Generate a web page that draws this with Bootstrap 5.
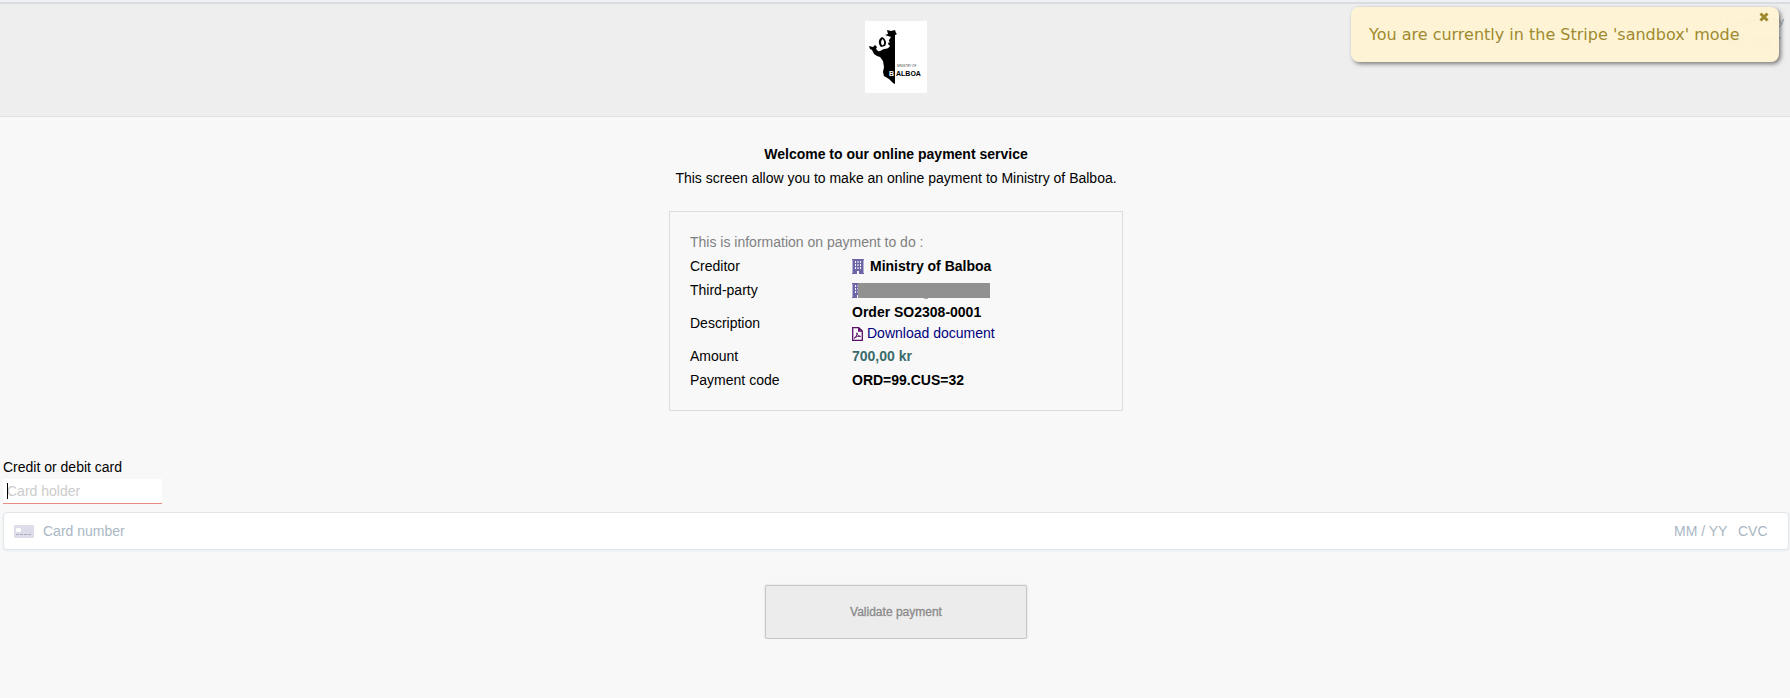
<!DOCTYPE html>
<html lang="en">
<head>
<meta charset="utf-8">
<meta name="viewport" content="width=device-width, initial-scale=1">
<title>Online payment</title>
<link href="https://cdn.jsdelivr.net/npm/bootstrap@5.3.0/dist/css/bootstrap.min.css" rel="stylesheet">
<script src="https://cdn.jsdelivr.net/npm/bootstrap@5.3.0/dist/js/bootstrap.bundle.min.js"></script>
<style>
body { background: #f8f8f8; color: #000; font-family: "Liberation Sans", Arial, sans-serif; font-size: 14px; line-height: 24px; }
.top-strip { height: 4px; background: #f0f1f3; border-bottom: 2px solid #d9dce0; }
.pay-header { background: #eee; border-bottom: 1px solid #e2e2e2; padding: 17px 0 23px 2px; }
.pay-logo { width: 62px; height: 72px; }
.powered { top: 5px; right: 6px; font-size: 11px; color: #888; text-align: right; }
.powered strong { display: block; padding-right: 3px; font-size: 16px; line-height: 16px; color: #aaa; }
.notice { top: 7px; right: 11px; width: 428px; max-width: 95%; padding: 16px 18px; border: 0; border-radius: 8px; background: #fff5d5; color: #9c8628; opacity: .96; box-shadow: 2px 2px 4px #777; font-family: "DejaVu Sans", sans-serif; font-size: 16px; line-height: 23px; z-index: 5; }
.notice-close { top: 4px; right: 9px; width: 12px; height: 12px; line-height: 0; }
.intro { padding: 25px 0 0 2px; }
.pay-box { width: 454px; max-width: 100%; margin-top: 21px; padding: 18px 20px; border: 1px solid #ddd; }
.pay-box table { width: 100%; }
.pay-box th, .pay-box td { padding: 0; height: 24px; }
.pay-box th { width: 162px; font-weight: 400; }
.pay-box caption { caption-side: top; padding: 0; color: #808080; }
.two-lines { line-height: 21px; }
.bldg-row { gap: 6px; }
.bldg { width: 12px; height: 15px; flex: none; }
.redacted { width: 132px; height: 15px; margin-left: -12px; background: #919191; }
.redacted::after { content: ""; position: absolute; left: 50%; top: 100%; width: 4px; height: 1px; background: #aaa; }
.doc-link { color: #00007f; gap: 4px; }
.amount { color: #3b6b6b; }
.pay-form { padding: 44px 1px 0 3px; }
.holder { width: 159px; }
.holder input { height: 25px; padding: 0 4px; background: #fff; border: 0; border-bottom: 1px solid #e88a85; line-height: 24px; }
.holder::after { content: ""; position: absolute; left: 4px; top: 4px; width: 1px; height: 16px; background: #000; }
.holder input::placeholder { color: #ccc; }
.pay-form input { color: #000; outline: 0; }
.stripe-field { margin-top: 8px; height: 38px; padding: 0 20px 0 10px; background: #fff; border: 1px solid #e2e5e9; border-radius: 4px; box-shadow: 0 1px 3px #e6ebf1; }
.stripe-field input { border: 0; padding: 0; background: none; }
.stripe-field input::placeholder { color: #aab7c4; }
.card-ic { width: 20px; height: 13px; margin-right: 9px; flex: none; }
.expiry { width: 56px; margin-right: 8px; }
.cvc { width: 30px; }
.validate { width: 262px; height: 54px; margin-top: 35px; border: 1px solid #c6c6c6; border-radius: 2px; background: #ececec; color: #8a8a8a; font-size: 12px; box-shadow: 0 0 2px #ccc; -webkit-text-stroke: 0.3px #8a8a8a; }
</style>
</head>
<body>
<div class="top-strip"></div>
<header class="pay-header position-relative text-center">
  <svg class="pay-logo" viewBox="0 0 62 72" role="img" aria-label="Ministry of Balboa">
    <rect width="62" height="72" fill="#fff"/>
    <path d="M20 14l3-1-1-4 4 1 4-1 1 3 1 1-2 1v49l-2-1-4-4-5-3-1-4 1-5-1-6-3-4-3-1-3-2-2-4-2-1-1-3 4 1 2-2 2 2-1 2 2 2c2 1 3-1 6-2 3 0 5-1 6-3l-2-2 1-4 2-3z" fill="#000"/>
    <path d="M17 16c-4 2-4 7-1 10l4-1c2-3 1-7-3-9z" fill="#000"/>
    <path d="M17.500 18c-2 2-2 5 0 6.500 2-1 2.500-4 0-6.500zM20 17.500l2 4 3 0-3-4z" fill="#fff"/>
    <text x="32" y="46" font-size="3" fill="#444" font-family="Liberation Sans">MINISTRY OF</text>
    <text x="24" y="55" font-size="7" font-weight="700" fill="#fff" font-family="Liberation Sans">B</text>
    <text x="31" y="55" font-size="7" font-weight="700" fill="#000" font-family="Liberation Sans">ALBOA</text>
  </svg>
  <div class="powered position-absolute">Powered by<strong>Dolibarr</strong></div>
</header>
<div class="notice position-absolute" role="alert">
  You are currently in the Stripe 'sandbox' mode
  <button type="button" class="notice-close position-absolute p-0 border-0 bg-transparent" aria-label="Close">
    <svg width="12" height="12" viewBox="0 0 12 12"><path d="M2.500 2.500l7 7M9.500 2.500l-7 7" stroke="#9c8628" stroke-width="3"/></svg>
  </button>
</div>
<main>
  <div class="intro d-flex flex-column align-items-center text-center">
    <strong>Welcome to our online payment service</strong>
    <div>This screen allow you to make an online payment to Ministry of Balboa.</div>
    <section class="pay-box text-start">
      <table>
        <caption>This is information on payment to do :</caption>
        <tbody>
        <tr><th scope="row">Creditor</th><td><div class="bldg-row d-flex align-items-center"><svg class="bldg" viewBox="0 0 12 15"><use href="#bldg"/></svg><strong>Ministry of Balboa</strong></div></td></tr>
        <tr><th scope="row">Third-party</th><td><div class="bldg-row d-flex align-items-center"><svg class="bldg" viewBox="0 0 12 15"><g id="bldg"><path d="M0 0h12v1h-.5v13h.5v1H7v-3H5v3H0v-1h.5V1H0z" fill="#6c66a8"/><path d="M3 2h1v2H3zM5.500 2h1v2h-1zM8 2h1v2H8zM3 5h1v2H3zM5.500 5h1v2h-1zM8 5h1v2H8zM3 8h1v2H3zM5.500 8h1v2h-1zM8 8h1v2H8z" fill="#f8f8f8"/></g></svg><span class="redacted position-relative"></span></div></td></tr>
        <tr class="two-lines"><th scope="row">Description</th><td><strong>Order SO2308-0001</strong><a href="#" class="doc-link d-flex align-items-center text-decoration-none"><svg width="11" height="14" viewBox="0 0 11 14" fill="none" stroke="#5b0f6b"><path d="M.7.700h6L10.300 4v9.300H.700zM6.700.700V4h3.600" stroke-width="1.300"/><path d="M2.200 11.200c1.600-.8 3-3 2.700-5.400.4 2.400 1.500 3.400 3.700 3.600-2-.4-4 0-6.400 1.800z"/></svg>Download document</a></td></tr>
        <tr><th scope="row">Amount</th><td><strong class="amount">700,00 kr</strong></td></tr>
        <tr><th scope="row">Payment code</th><td><strong>ORD=99.CUS=32</strong></td></tr>
        </tbody>
      </table>
    </section>
  </div>
  <form class="pay-form">
    <label for="holder" class="d-block">Credit or debit card</label>
    <div class="holder position-relative"><input id="holder" class="w-100 d-block" type="text" placeholder="Card holder"></div>
    <div class="stripe-field d-flex align-items-center">
      <svg class="card-ic" viewBox="0 0 20 13"><rect width="20" height="13" rx="1" fill="#dcdde8"/><rect x="2" y="3" width="5" height="4" rx="1" fill="#fff"/><path d="M2 9.500h16" stroke="#a9acc0" stroke-dasharray="3 1"/></svg>
      <input class="flex-grow-1" type="text" placeholder="Card number" aria-label="Card number">
      <input class="expiry" type="text" placeholder="MM / YY" aria-label="Expiry date">
      <input class="cvc" type="text" placeholder="CVC" aria-label="CVC">
    </div>
    <div class="text-center"><button type="button" class="validate">Validate payment</button></div>
  </form>
</main>
</body>
</html>
